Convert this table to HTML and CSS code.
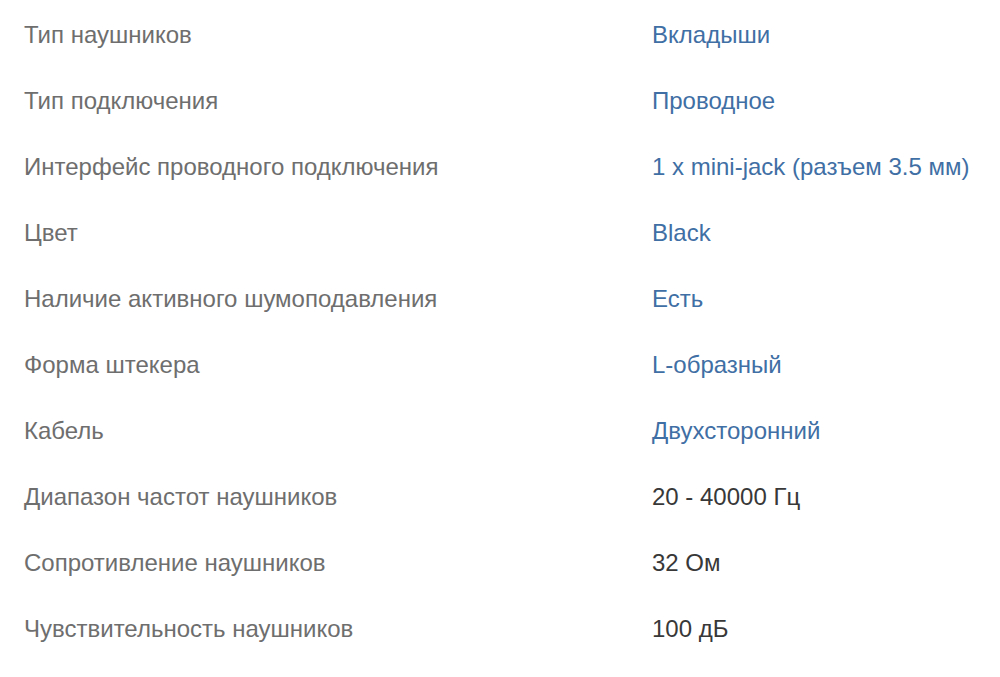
FILE: index.html
```html
<!DOCTYPE html>
<html lang="ru">
<head>
<meta charset="utf-8">
<link rel="stylesheet" href="styles.css">
</head>
<body>
<div class="specs">
  <div class="row"><span class="label">Тип наушников</span><span class="value link">Вкладыши</span></div>
  <div class="row"><span class="label">Тип подключения</span><span class="value link">Проводное</span></div>
  <div class="row"><span class="label">Интерфейс проводного подключения</span><span class="value link">1 x mini-jack (разъем 3.5 мм)</span></div>
  <div class="row"><span class="label">Цвет</span><span class="value link">Black</span></div>
  <div class="row"><span class="label">Наличие активного шумоподавления</span><span class="value link">Есть</span></div>
  <div class="row"><span class="label">Форма штекера</span><span class="value link">L-образный</span></div>
  <div class="row"><span class="label">Кабель</span><span class="value link">Двухсторонний</span></div>
  <div class="row"><span class="label">Диапазон частот наушников</span><span class="value">20 - 40000 Гц</span></div>
  <div class="row"><span class="label">Сопротивление наушников</span><span class="value">32 Ом</span></div>
  <div class="row"><span class="label">Чувствительность наушников</span><span class="value">100 дБ</span></div>
</div>
</body>
</html>
```
FILE: styles.css
```css
html, body {
  margin: 0;
  padding: 0;
  background: #ffffff;
}
body {
  font-family: "Liberation Sans", Arial, sans-serif;
  font-size: 24px;
}
.specs {
  padding: 2px 0 0 24px;
}
.row {
  display: grid;
  grid-template-columns: 628px auto;
  height: 66px;
  line-height: 66px;
  white-space: nowrap;
}
.label {
  color: #6e6e6e;
}
.value {
  color: #383838;
}
.value.link {
  color: #3f6fa4;
}
```
